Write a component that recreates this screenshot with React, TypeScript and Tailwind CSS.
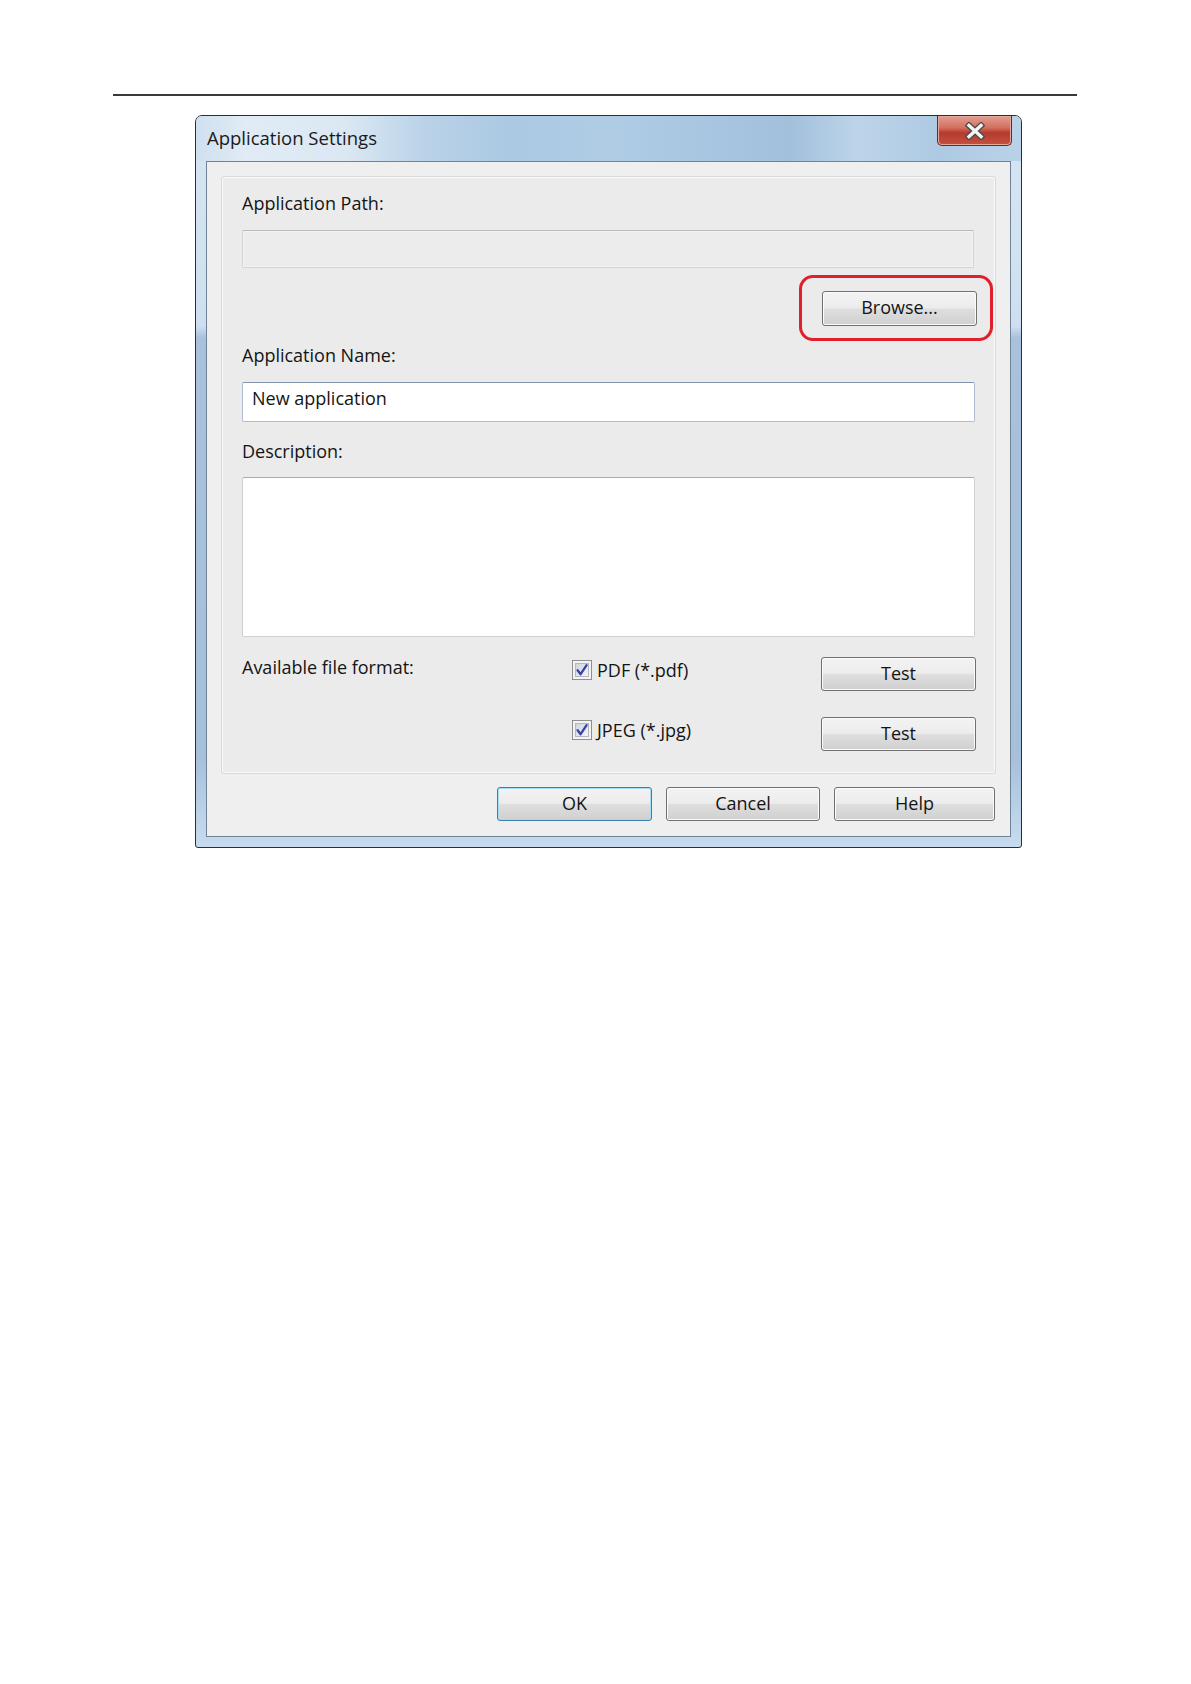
import React from "react";

const font = "font-['Open_Sans','Noto_Sans','Liberation_Sans',sans-serif]";

function WinButton({
  label,
  w,
  primary = false,
  className = "",
}: {
  label: string;
  w: string;
  primary?: boolean;
  className?: string;
}) {
  return (
    <div
      className={`${w} h-[34px] flex items-center justify-center pb-[3px] rounded-[3px] border text-[18px] leading-[24px] text-[#141414] bg-[linear-gradient(to_bottom,#f3f3f3_0%,#ececec_48%,#dedede_52%,#d0d0d0_100%)] ${
        primary
          ? "border-[#3c7fb1] shadow-[inset_0_0_0_1px_#a6dbf6]"
          : "border-[#707070] shadow-[inset_0_0_0_1px_#fbfbfb]"
      } ${className}`}
    >
      {label}
    </div>
  );
}

function CheckBox() {
  return (
    <svg width="20" height="20" viewBox="0 0 20 20" className="shrink-0">
      <defs>
        <linearGradient id="cbg" x1="0" y1="0" x2="1" y2="1">
          <stop offset="0" stopColor="#cfd3dc" />
          <stop offset="1" stopColor="#f6f6f6" />
        </linearGradient>
      </defs>
      <rect x="0.5" y="0.5" width="19" height="19" fill="#f4f4f4" stroke="#8e8f8f" />
      <rect x="3.5" y="3.5" width="13" height="13" fill="url(#cbg)" stroke="#b4b7bd" />
      <path
        d="M5.6 10.2 L8.6 14.2 L14.6 5.2"
        fill="none"
        stroke="#3a44a6"
        strokeWidth="2.3"
        strokeLinejoin="round"
        strokeLinecap="round"
      />
    </svg>
  );
}

export default function App() {
  return (
    <div className={`min-h-[1684px] w-full bg-white pt-[94px] ${font}`}>
      <div className="ml-[113px] w-[964px] h-[2px] bg-[#3a3a3a]" />

      {/* Dialog */}
      <div className="ml-[195px] mt-[19px] w-[827px] h-[733px] flex flex-col border border-[#2e2e2e] rounded-t-[7px] rounded-b-[3px] bg-[linear-gradient(to_bottom,#d6e5f3_0px,#cee0f0_210px,#a9c1dd_222px,#a6bfdb_640px,#bcd3e8_700px,#c9dcee_733px)] overflow-hidden">
        {/* Title bar */}
        <div className="h-[45px] shrink-0 flex items-start justify-between pl-[11px] pr-[9px] bg-[linear-gradient(to_right,#cfe0ef_0%,#e0ebf5_6%,#dbe8f3_18%,#b9d2e8_28%,#abc9e3_38%,#b0cce5_50%,#a8c6e1_62%,#a2bfdb_72%,#bcd4e9_80%,#aecae3_90%,#b9d2e8_100%)]">
          <div className="pt-[10px] text-[18.5px] leading-[24px] text-[#1a1a1a]">
            Application Settings
          </div>
          <div className="w-[75px] h-[30px] flex items-center justify-center border border-t-0 border-[#6a2820] rounded-b-[5px] bg-[linear-gradient(to_bottom,#e2a093_0%,#d46f60_40%,#b53b2c_58%,#c35143_100%)] shadow-[inset_0_0_0_1px_#e8a79b]">
            <svg width="24" height="18" viewBox="0 0 24 18">
              <path d="M6 3.5 L18 14.5 M18 3.5 L6 14.5" stroke="#4a4a4a" strokeWidth="6" strokeLinecap="square" />
              <path d="M6 3.5 L18 14.5 M18 3.5 L6 14.5" stroke="#f4f4f4" strokeWidth="3.4" strokeLinecap="square" />
            </svg>
          </div>
        </div>

        {/* Client area */}
        <div className="mx-[10px] mb-[10px] flex-1 flex flex-col border border-[#6f8296] bg-[#efefef] pt-[14px] px-[14px] pb-[15px]">
          {/* Group box */}
          <div className="h-[598px] rounded-[3px] border border-[#d9d9d9] shadow-[inset_0_0_0_1px_#f9f9f9] bg-[#ebebeb] flex flex-col pt-[14px] pl-[20px] pr-[19px] pb-[22px] text-[18px] leading-[24px] text-[#141414]">
            <div className="h-[24px]">Application Path:</div>
            <div className="mt-[15px] mr-[2px] h-[38px] rounded-[2px] border border-[#d3d3d3] border-t-[#b9b9b9] bg-[#ececec] shadow-[inset_0_0_0_1px_#f3f3f3]" />

            <div className="mt-[23px] flex justify-end -mr-[1px]">
              <div className="relative">
                <WinButton label="Browse..." w="w-[155px] h-[35px]" />
                <div className="absolute -left-[23px] -right-[16px] -top-[16px] -bottom-[15px] rounded-[14px] border-[3px] border-[#e0202b]" />
              </div>
            </div>

            <div className="mt-[17px] h-[24px]">Application Name:</div>
            <div className="mt-[15px] mr-[1px] h-[40px] rounded-[2px] border border-[#aebdd0] border-t-[#8394ad] bg-white pl-[9px] pt-[3px]">
              New application
            </div>

            <div className="mt-[17px] h-[24px]">Description:</div>
            <div className="mt-[14px] mr-[1px] h-[160px] rounded-[2px] border border-[#cfcfcf] border-t-[#ababab] bg-white" />

            <div className="mt-[20px] h-[34px] flex items-start">
              <div className="w-[330px] -mt-[2px]">Available file format:</div>
              <div className="flex-1 flex items-start">
                <div className="mt-[3px]">
                  <CheckBox />
                </div>
                <div className="ml-[5px] mt-[1px]">PDF (*.pdf)</div>
              </div>
              <WinButton label="Test" w="w-[155px]" />
            </div>

            <div className="mt-[26px] h-[34px] flex items-start">
              <div className="w-[330px]" />
              <div className="flex-1 flex items-start">
                <div className="mt-[3px]">
                  <CheckBox />
                </div>
                <div className="ml-[5px] mt-[1px]">JPEG (*.jpg)</div>
              </div>
              <WinButton label="Test" w="w-[155px]" />
            </div>
          </div>

          {/* Bottom buttons */}
          <div className="mt-[13px] flex justify-end gap-[14px] pr-[1px]">
            <WinButton label="OK" w="w-[155px]" primary />
            <WinButton label="Cancel" w="w-[154px]" />
            <WinButton label="Help" w="w-[161px]" />
          </div>
        </div>
      </div>
    </div>
  );
}
